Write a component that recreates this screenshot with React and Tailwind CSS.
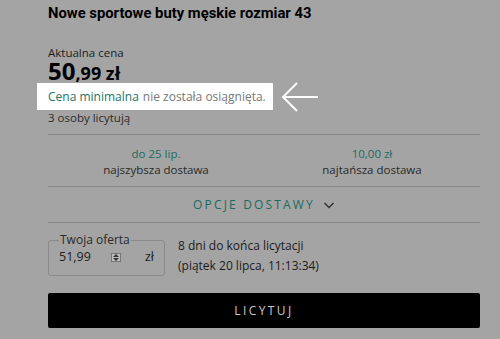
export default function App() {
  return (
    <div className="w-[500px] h-[339px] overflow-hidden bg-[#a4a4a4] font-['Open_Sans',sans-serif] text-[#1c1c1c]">
      <div className="ml-[48px] w-[432px]">
        <h1 className="pt-[3px] text-[14.8px] leading-[20px] font-bold text-black font-['Roboto',sans-serif]">
          Nowe sportowe buty męskie rozmiar 43
        </h1>

        <div className="mt-[21px] text-[11.5px] leading-[18px]">Aktualna cena</div>
        <div className="-mt-[2px] h-[22px] font-bold text-black leading-[22px] flex items-baseline">
          <span className="text-[24px]">50</span>
          <span className="text-[18px]">,99 zł</span>
        </div>

        <div className="mt-[1px] flex items-center">
          <div className="-ml-[11px] bg-white h-[27px] pl-[11px] pr-[7px] flex items-center text-[12px] whitespace-nowrap">
            <span className="text-[#1b7569]">Cena minimalna</span>
            <span className="ml-[4px] text-[#777]">nie została osiągnięta.</span>
          </div>
          <svg className="ml-[8px] -my-[3px]" width="38" height="32" viewBox="0 0 38 32" fill="none" stroke="white" strokeWidth="2">
            <path d="M37 16H3M16 2L2 16l14 14" />
          </svg>
        </div>

        <div className="text-[11.5px] leading-[16px] text-[#2c2c2c]">3 osoby licytują</div>

        <div className="mt-[8px] border-t border-[#888] grid grid-cols-2 text-center text-[11.5px] leading-[16px] pt-[11px] pb-[8px]">
          <div>
            <div className="text-[#1b6b60]">do 25 lip.</div>
            <div className="text-[#2a2a2a]">najszybsza dostawa</div>
          </div>
          <div>
            <div className="text-[#1b6b60]">10,00 zł</div>
            <div className="text-[#2a2a2a]">najtańsza dostawa</div>
          </div>
        </div>

        <div className="border-t border-[#888] h-[36px] flex items-center justify-center text-[12px] tracking-[0.18em] text-[#1b6b60] font-medium">
          OPCJE DOSTAWY
          <svg className="ml-[8px]" width="12" height="12" viewBox="0 0 12 12" fill="none" stroke="#333" strokeWidth="1.5">
            <path d="M1.5 4l4.5 4.5L10.5 4" />
          </svg>
        </div>

        <div className="border-t border-[#888] pt-[10px] flex">
          <fieldset className="w-[117px] h-[43px] border border-[#8a8a8a] rounded-[3px] px-[10px]">
            <legend className="px-[1px] text-[12px] leading-[14px] text-[#2a2a2a]">Twoja oferta</legend>
            <div className="flex items-center text-[12.5px] text-[#1c1c1c] pt-[1px]">
              <span>51,99</span>
              <span className="ml-[20px] w-[10px] h-[9px] border border-[#777] bg-[#bdbdbd] flex flex-col items-center justify-center gap-[1px]">
                <span className="w-0 h-0 border-l-[3px] border-r-[3px] border-b-[3px] border-l-transparent border-r-transparent border-b-[#333]"></span>
                <span className="w-0 h-0 border-l-[3px] border-r-[3px] border-t-[3px] border-l-transparent border-r-transparent border-t-[#333]"></span>
              </span>
              <span className="ml-auto">zł</span>
            </div>
          </fieldset>
          <div className="ml-[13px] text-[12px] leading-[20px] text-[#1c1c1c] pt-[3px]">
            <div>8 dni do końca licytacji</div>
            <div>(piątek 20 lipca, 11:13:34)</div>
          </div>
        </div>

        <button className="mt-[17px] w-full h-[35px] bg-black rounded-[2px] text-[#c8c8c8] text-[12px] tracking-[0.2em] flex items-center justify-center">
          LICYTUJ
        </button>
      </div>
    </div>
  );
}
